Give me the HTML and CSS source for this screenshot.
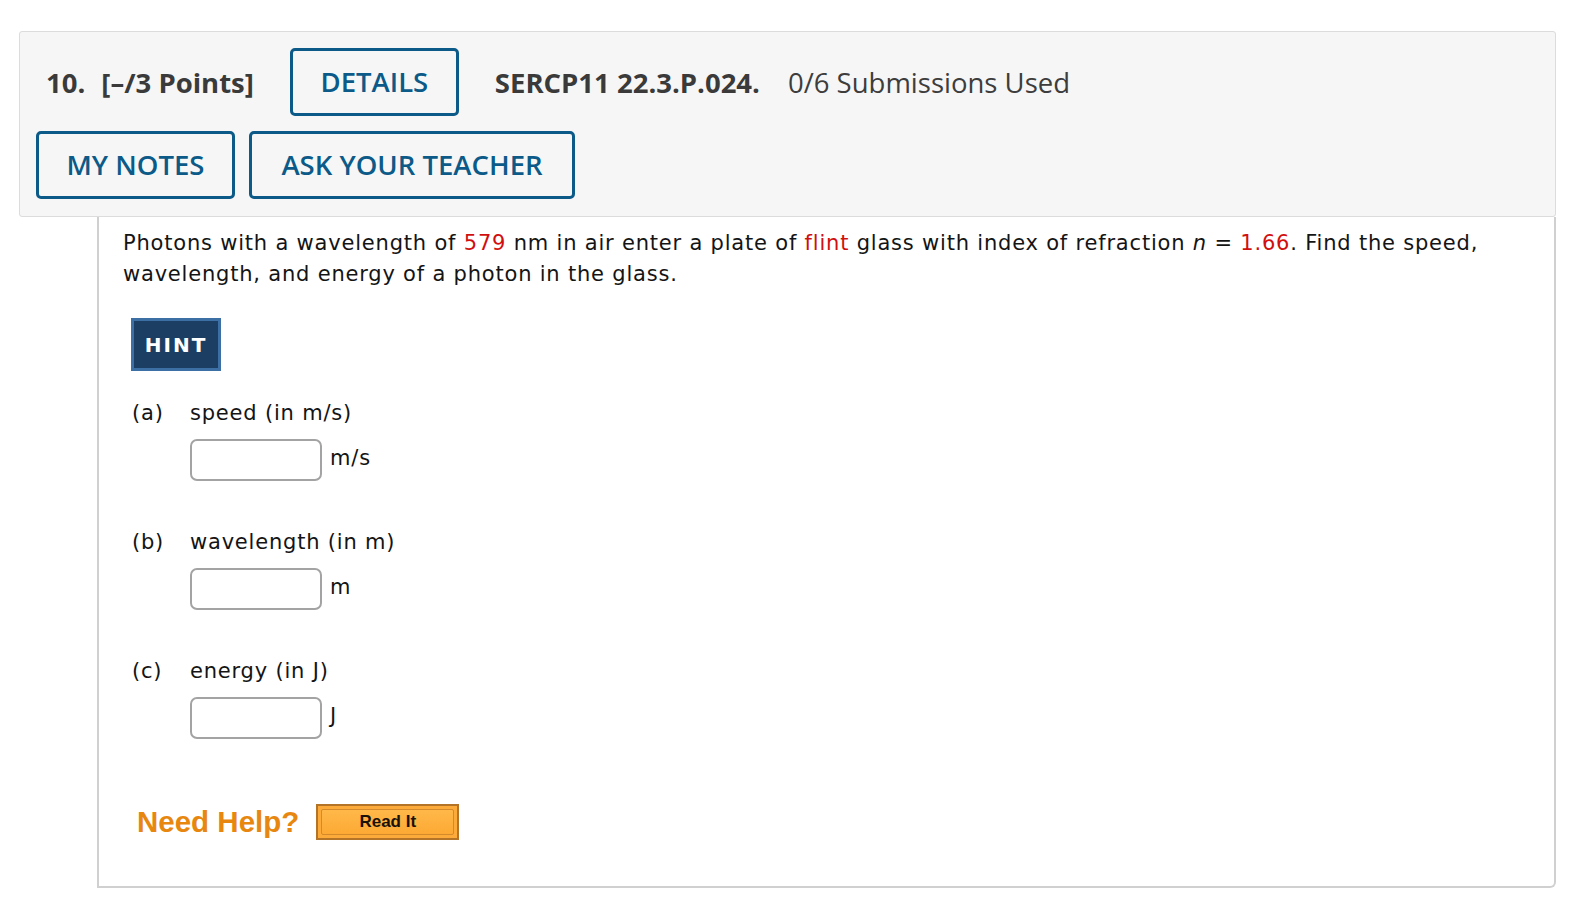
FILE: index.html
```html
<!DOCTYPE html>
<html>
<head>
<meta charset="utf-8">
<link rel="stylesheet" href="styles.css">
</head>
<body>
<div class="question">
  <div class="qhead">
    <div class="row row1">
      <span class="qnum">10.</span>
      <span class="points">[–/3 Points]</span>
      <span class="btn btn-details">DETAILS</span>
      <span class="code">SERCP11 22.3.P.024.</span>
      <span class="subs">0/6 Submissions Used</span>
    </div>
    <div class="row row2">
      <span class="btn btn-notes">MY NOTES</span>
      <span class="btn btn-ask">ASK YOUR TEACHER</span>
    </div>
  </div>
  <div class="qbody">
    <p class="prompt">Photons with a wavelength of <span class="red">579</span> nm in air enter a plate of <span class="red">flint</span> glass with index of refraction <i>n</i> = <span class="red">1.66</span>. Find the speed, wavelength, and energy of a photon in the glass.</p>
    <div class="hint">HINT</div>
    <div class="part">
      <div class="plabel"><span class="pletter">(a)</span><span>speed (in m/s)</span></div>
      <div class="answer"><span class="inputbox"></span><span class="unit">m/s</span></div>
    </div>
    <div class="part">
      <div class="plabel"><span class="pletter">(b)</span><span>wavelength (in m)</span></div>
      <div class="answer"><span class="inputbox"></span><span class="unit">m</span></div>
    </div>
    <div class="part">
      <div class="plabel"><span class="pletter">(c)</span><span>energy (in J)</span></div>
      <div class="answer"><span class="inputbox"></span><span class="unit">J</span></div>
    </div>
    <div class="help">
      <span class="needhelp">Need Help?</span>
      <span class="readit"><span class="readit-inner">Read It</span></span>
    </div>
  </div>
</div>
</body>
</html>
```

FILE: styles.css
```css
html, body {
  margin: 0;
  padding: 0;
  background: #ffffff;
}
body {
  padding: 31px 28px 20px 19px;
}
.question {
  width: 1537px;
}
.qhead {
  background: #f6f6f6;
  border: 1px solid #dcdcdc;
  border-radius: 3px;
  padding: 16px 0 17px 16px;
  font-family: "Open Sans", sans-serif;
  color: #3a3a3a;
}
.row {
  display: flex;
  align-items: center;
}
.row1 {
  padding-left: 10px;
  margin-bottom: 15px;
}
.qnum {
  font-weight: 700;
  font-size: 27.5px;
  margin-right: 16px;
}
.points {
  font-weight: 700;
  font-size: 27.5px;
  margin-right: 36px;
}
.code {
  font-weight: 700;
  font-size: 27.5px;
  margin-left: 36px;
  margin-right: 28px;
}
.subs {
  font-size: 27.5px;
  color: #3d3d3d;
}
.btn {
  display: inline-block;
  box-sizing: border-box;
  height: 68px;
  line-height: 62px;
  border: 3px solid #0b5a88;
  border-radius: 5px;
  color: #0b5a88;
  font-size: 27.5px;
  font-weight: 600;
  text-align: center;
  background: transparent;
}
.btn-details {
  width: 169px;
}
.btn-notes {
  width: 199px;
  margin-right: 14px;
}
.btn-ask {
  width: 326px;
}
.qbody {
  margin-left: 78px;
  border: 2px solid #d0d0d0;
  border-top: none;
  border-radius: 0 0 6px 0;
  padding: 11px 20px 46px 24px;
  font-family: "DejaVu Sans", Verdana, sans-serif;
  font-size: 21px;
  letter-spacing: 0.8px;
  color: #141414;
}
.prompt {
  margin: 0;
  line-height: 31px;
}
.red {
  color: #d10f0f;
}
.hint {
  display: inline-block;
  margin: 28px 0 0 8px;
  box-sizing: border-box;
  width: 90px;
  height: 53px;
  line-height: 48px;
  background: #1d3e63;
  border: 3px solid #3c6fa3;
  color: #ffffff;
  font-weight: 700;
  font-size: 20px;
  letter-spacing: 2px;
  text-align: center;
}
.part {
  margin-left: 9px;
}
.plabel {
  display: flex;
  line-height: 31px;
  margin-top: 27px;
}
.part + .part .plabel {
  margin-top: 46px;
}
.pletter {
  width: 58px;
}
.answer {
  display: flex;
  align-items: flex-start;
  margin: 10px 0 0 58px;
}
.inputbox {
  display: inline-block;
  box-sizing: border-box;
  width: 132px;
  height: 42px;
  border: 2px solid #a3a3a3;
  border-radius: 7px;
  background: #fff;
}
.unit {
  margin-left: 8px;
  line-height: 38px;
}
.help {
  display: flex;
  align-items: center;
  margin: 65px 0 0 14px;
}
.needhelp {
  font-family: "Liberation Sans", Arial, sans-serif;
  font-weight: 700;
  font-size: 29.5px;
  letter-spacing: 0;
  color: #e8870f;
  margin-right: 17px;
}
.readit {
  display: inline-block;
  box-sizing: border-box;
  width: 143px;
  height: 36px;
  padding: 3px;
  background: #fcaa3a;
  border: 2px solid #b47428;
}
.readit-inner {
  display: block;
  box-sizing: border-box;
  height: 100%;
  border: 1px solid #d48a2a;
  border-radius: 2px;
  background: linear-gradient(#ffb849, #fca934);
  font-family: "Liberation Sans", Arial, sans-serif;
  font-weight: 700;
  font-size: 17px;
  letter-spacing: 0;
  line-height: 24px;
  color: #1a1208;
  text-align: center;
}
```
